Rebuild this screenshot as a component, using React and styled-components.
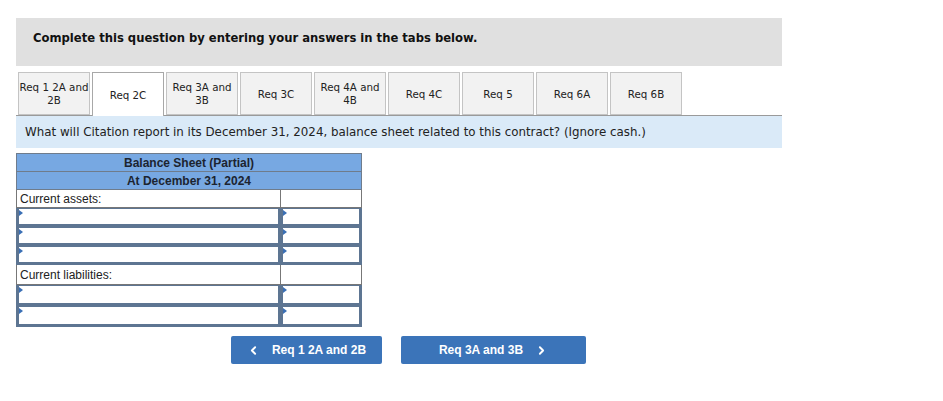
import React from "react";
import styled, { createGlobalStyle } from "styled-components";
import { ChevronLeft, ChevronRight } from "lucide-react";

const Global = createGlobalStyle`
  html, body { margin: 0; padding: 0; background: #fff; }
  body { font-family: "DejaVu Sans", Verdana, sans-serif; color: #222; }
`;

const Page = styled.div`
  padding: 18px 0 0 16px;
  width: 766px;
`;

const Header = styled.div`
  height: 48px;
  box-sizing: border-box;
  background: #e0e0e0;
  padding: 13px 0 0 17px;
  font-weight: bold;
  font-size: 11.6px;
  color: #111;
`;

const TabBar = styled.div`
  margin-top: 6px;
  display: flex;
  gap: 2px;
  padding-left: 2px;
  border-bottom: 1px solid #9a9a9a;
  height: 43px;
`;

const Tab = styled.div`
  width: 72px;
  box-sizing: border-box;
  height: ${(p) => (p.$active ? "44px" : "43px")};
  border: 1px solid ${(p) => (p.$active ? "#a8a8a8" : "#c4c4c4")};
  border-bottom: ${(p) => (p.$active ? "none" : "1px solid #c4c4c4")};
  background: ${(p) => (p.$active ? "#fff" : "#f2f2f2")};
  display: flex;
  align-items: center;
  justify-content: center;
  text-align: center;
  font-size: 10.3px;
  line-height: 13px;
  padding-top: 1px;
  color: #222;
  white-space: nowrap;
  position: relative;
  z-index: 1;
`;

const Question = styled.div`
  height: 32px;
  box-sizing: border-box;
  background: #daeaf8;
  padding: 9px 0 0 9px;
  font-size: 11.85px;
  color: #222;
`;

const Sheet = styled.table`
  margin-top: 5px;
  width: 345px;
  border-collapse: collapse;
  table-layout: fixed;
  font-family: "Liberation Sans", Arial, sans-serif;
  font-size: 12px;
  color: #222;
`;

const HeadCell = styled.th`
  background: #77a8e2;
  border: 1px solid #6f7c8c;
  height: 17px;
  padding: 0;
  font-weight: bold;
  font-size: 12px;
  text-align: center;
  color: #1c2430;
`;

const LabelCell = styled.td`
  border: 1px solid #777;
  height: ${(p) => p.$h || 17}px;
  padding: 0 0 0 3px;
  vertical-align: middle;
  background: #fff;
`;

const InputCell = styled.td`
  border: 1px solid #5d7592;
  padding: 0;
  height: ${(p) => p.$h || 18}px;
`;

const Input = styled.div`
  box-sizing: border-box;
  height: ${(p) => p.$h || 18}px;
  border: 2px solid #5d7592;
  border-top-width: 1px;
  background: #fff;
  position: relative;
  &::before {
    content: "";
    position: absolute;
    left: 0;
    top: 1px;
    border-left: 4px solid #3a6fb5;
    border-top: 3px solid transparent;
    border-bottom: 3px solid transparent;
  }
`;

const Nav = styled.div`
  margin-top: 9px;
  display: flex;
  gap: 19px;
  padding-left: 215px;
`;

const NavButton = styled.button`
  width: ${(p) => p.$w}px;
  height: 28px;
  background: #3b74b9;
  color: #fff;
  border: none;
  border-radius: 2px;
  font-family: "Liberation Sans", Arial, sans-serif;
  font-weight: bold;
  font-size: 12px;
  display: flex;
  align-items: center;
  justify-content: center;
  gap: 12px;
  padding: 0;
  svg { flex: none; }
`;

const tabs = [
  ["Req 1 2A and", "2B"],
  ["Req 2C"],
  ["Req 3A and", "3B"],
  ["Req 3C"],
  ["Req 4A and", "4B"],
  ["Req 4C"],
  ["Req 5"],
  ["Req 6A"],
  ["Req 6B"],
];

const InputRow = ({ h }) => (
  <tr>
    <InputCell $h={h}><Input $h={h} /></InputCell>
    <InputCell $h={h}><Input $h={h} /></InputCell>
  </tr>
);

export default function App() {
  return (
    <>
      <Global />
      <Page>
        <Header>Complete this question by entering your answers in the tabs below.</Header>
        <TabBar>
          {tabs.map((t, i) => (
            <Tab key={i} $active={i === 1}>
              <span>
                {t[0]}
                {t[1] && <br />}
                {t[1]}
              </span>
            </Tab>
          ))}
        </TabBar>
        <Question>
          What will Citation report in its December 31, 2024, balance sheet related to this contract? (Ignore cash.)
        </Question>
        <Sheet>
          <colgroup>
            <col style={{ width: 264 }} />
            <col style={{ width: 81 }} />
          </colgroup>
          <thead>
            <tr><HeadCell colSpan={2}>Balance Sheet (Partial)</HeadCell></tr>
            <tr><HeadCell colSpan={2}>At December 31, 2024</HeadCell></tr>
          </thead>
          <tbody>
            <tr>
              <LabelCell>Current assets:</LabelCell>
              <LabelCell />
            </tr>
            <InputRow h={18} />
            <InputRow h={18} />
            <InputRow h={18} />
            <tr>
              <LabelCell $h={19}>Current liabilities:</LabelCell>
              <LabelCell $h={19} />
            </tr>
            <InputRow h={20} />
            <InputRow h={20} />
          </tbody>
        </Sheet>
        <Nav>
          <NavButton $w={151}>
            <ChevronLeft size={13} strokeWidth={3.5} />
            Req 1 2A and 2B
          </NavButton>
          <NavButton $w={185}>
            Req 3A and 3B
            <ChevronRight size={13} strokeWidth={3.5} />
          </NavButton>
        </Nav>
      </Page>
    </>
  );
}
